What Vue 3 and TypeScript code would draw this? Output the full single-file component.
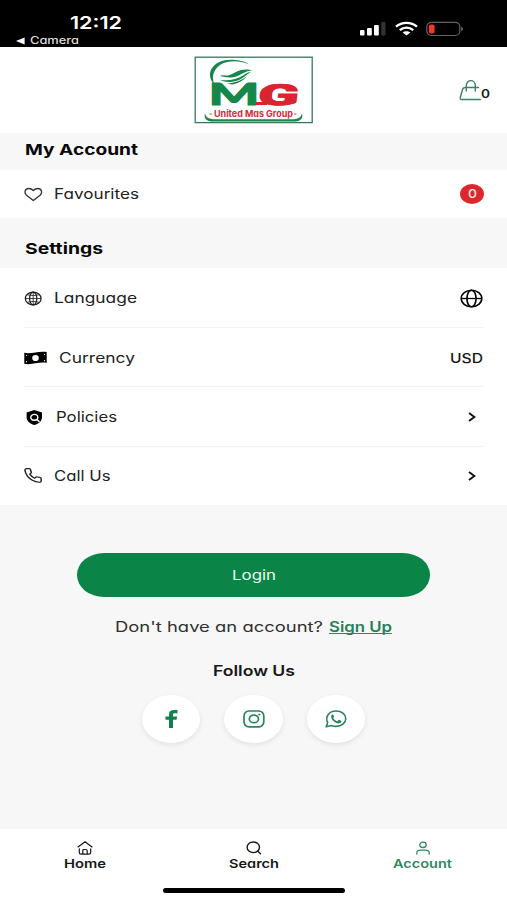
<script setup lang="ts">
interface Row {
  icon: 'globe' | 'cash' | 'shield' | 'phone'
  label: string
  width: number
  end: 'globe' | 'currency' | 'chevron'
}

const settings: Row[] = [
  { icon: 'globe', label: 'Language', width: 83, end: 'globe' },
  { icon: 'cash', label: 'Currency', width: 76, end: 'currency' },
  { icon: 'shield', label: 'Policies', width: 61, end: 'chevron' },
  { icon: 'phone', label: 'Call Us', width: 56.5, end: 'chevron' },
]

const tabs = [
  { id: 'home', label: 'Home', width: 42 },
  { id: 'search', label: 'Search', width: 50 },
  { id: 'account', label: 'Account', width: 59 },
]
</script>

<template>
  <main class="screen">
    <div class="status">
      <div class="clock">
        <svg class="time" width="52" height="18"><text x="0" y="15" textLength="52" lengthAdjust="spacingAndGlyphs">12:12</text></svg>
        <div class="back">
          <svg width="9" height="8" viewBox="0 0 9 8"><path d="M0 4 8.6 .6v6.8z" fill="#fff" /></svg>
          <svg class="camera" width="49" height="11"><text x="0" y="9" textLength="49" lengthAdjust="spacingAndGlyphs">Camera</text></svg>
        </div>
      </div>
      <div class="indicators">
        <svg width="26" height="14" viewBox="0 0 26 14">
          <rect x="0" y="8" width="4.5" height="5.5" rx="1" fill="#fff" />
          <rect x="7" y="6" width="4.8" height="7.5" rx="1" fill="#fff" />
          <rect x="14" y="3" width="4.8" height="10.5" rx="1" fill="#fff" />
          <rect x="21.3" y="0" width="4.2" height="13.5" rx="1" fill="#333" />
        </svg>
        <svg class="wifi" width="23" height="14" viewBox="0 0 23 14" fill="none" stroke="#fff" stroke-width="2.4">
          <path d="M1 4.7C7-.4 16-.4 22 4.7M4.8 8.2c3.8-3.4 9.6-3.4 13.4 0" />
          <path d="M7.6 10.6c2.2-1.8 5.6-1.8 7.8 0l-3.9 3z" fill="#fff" stroke="none" />
        </svg>
        <svg class="battery" width="38" height="15" viewBox="0 0 38 15">
          <rect x=".8" y=".3" width="33" height="13.2" rx="4.5" fill="none" stroke="#636363" stroke-width="1.2" />
          <rect x="2.8" y="2.5" width="5.8" height="9" rx="2" fill="#f0372f" />
          <path d="M35.3 4.6q3.2 2.4 0 4.8z" fill="#808080" />
        </svg>
      </div>
    </div>

    <header class="header">
      <svg class="logo" width="120" height="68" viewBox="0 0 120 68">
        <rect x="1.2" y="1.2" width="117" height="65.4" fill="#fff" stroke="#35785b" stroke-width="1.3" />
        <path d="M21 29.5C9 17 20 2 41 4c6 .5 11 2 14 4.500C45 4 33 4.500 26 9c-7 5-9 13-5 20.500Z" fill="#15874b" />
        <path d="M26 20c2-1.500 5 0 8-.5 5-1 8-4.500 13-5.500s9-.5 10.500.8c-6 .2-9 3.200-14 5.200-6 2.400-12 1.500-17.500 0Z" fill="#15874b" />
        <path d="M26 24c9 1 17-.5 23-4.500 3-2 5-3.500 8-3.500-4 2-6 5-11 7.500-6 3-13 3.500-20 .5Z" fill="#15874b" />
        <path d="M33 27.500c9-.5 16-4 21-8.500-4 5-9 8.500-16 9.500Z" fill="#15874b" />
        <text class="mark green" x="14.500" y="49" textLength="51" lengthAdjust="spacingAndGlyphs">M</text>
        <text class="mark red" transform="translate(63 49) skewX(-7)" x="0" y="0" textLength="41" lengthAdjust="spacingAndGlyphs">G</text>
        <path d="M62 46h11v3H62z" fill="#dc2430" />
        <text class="brand" x="20" y="60.500" textLength="79" lengthAdjust="spacingAndGlyphs">United Mas Group</text>
        <path d="M15.500 58h2.500m82 0h2.500" stroke="#d7404b" />
        <path d="M11 57c.5 4 3 5.800 8 6.200h81c5-.4 7.500-2.200 8-6.200 1.500 5.500-2 8.500-8 8.500H19c-6 0-9.500-3-8-8.500Z" fill="#15874b" />
      </svg>
      <div class="cart">
        <svg width="23" height="21" viewBox="0 0 23 21" fill="none" stroke="#3d8162" stroke-width="1.4" stroke-linecap="round" stroke-linejoin="round">
          <path d="M19.500 7.500H6.200Q4 7.500 3.500 9.700L1.300 17.500Q.9 19.500 3 19.500h18.500M7.300 11V5.600C7.300-1 16.300-1 16.300 5.600V11" />
        </svg>
        <svg class="count" width="9" height="12"><text x="0" y="10" textLength="9" lengthAdjust="spacingAndGlyphs">0</text></svg>
      </div>
    </header>

    <h2 class="heading account">
      <svg width="113" height="20"><text x="0" y="15" textLength="113" lengthAdjust="spacingAndGlyphs">My Account</text></svg>
    </h2>
    <section class="group">
      <div class="row favourites">
        <svg class="icon" width="19" height="15" viewBox="0 0 19 15" fill="none" stroke="#333" stroke-width="1.4" stroke-linejoin="round"><path d="M9.300 13.500 2.200 8C-.2 5.700 1 1.500 4.800 1.500c2 0 3.300.8 4.500 2 1.200-1.200 2.500-2 4.500-2 3.800 0 5 4.200 2.600 6.500Z" /></svg>
        <svg class="label" width="85" height="20"><text x="0" y="15" textLength="85" lengthAdjust="spacingAndGlyphs">Favourites</text></svg>
        <span class="badge"><svg width="9" height="12"><text x="0" y="10.200" textLength="9" lengthAdjust="spacingAndGlyphs">0</text></svg></span>
      </div>
    </section>

    <h2 class="heading settings">
      <svg width="78" height="20"><text x="0" y="15" textLength="78" lengthAdjust="spacingAndGlyphs">Settings</text></svg>
    </h2>
    <section class="group list">
      <div v-for="row in settings" :key="row.label" class="row">
        <svg v-if="row.icon === 'globe'" class="icon" width="18" height="15" viewBox="0 0 18 15" fill="none" stroke="#1c1c1c" stroke-width="1.25"><ellipse cx="9.200" cy="7.500" rx="7.900" ry="6.400" /><ellipse cx="9.200" cy="7.500" rx="3.600" ry="6.400" /><path d="M1.500 7.500h15.400M9.200 1v13M3.300 3.800q5.900 1.600 11.800 0M3.300 11.200q5.900-1.600 11.800 0" stroke-width=".8" /></svg>
        <svg v-else-if="row.icon === 'cash'" class="icon" width="23" height="14" viewBox="0 0 23 14"><path d="M.3 1.800c7 1.800 14-2.200 22.400-.8v10.900c-8-1.500-15 2.500-22.400.8Z" fill="#000" /><ellipse cx="11.500" cy="7" rx="3.300" ry="3.100" fill="#fff" /><g fill="#fff"><circle cx="2.600" cy="4.300" r=".6" /><circle cx="2.600" cy="10.700" r=".6" /><circle cx="20.500" cy="3.300" r=".6" /><circle cx="20.500" cy="9.700" r=".6" /></g></svg>
        <svg v-else-if="row.icon === 'shield'" class="icon" width="20" height="17" viewBox="0 0 20 17"><path d="m10.300 1 7.700 2.600v4.600c0 3.700-3 6.500-7.700 7.900-4.700-1.400-7.700-4.200-7.700-7.900V3.600Z" fill="#000" /><ellipse cx="10.300" cy="8.300" rx="3.500" ry="2.900" fill="none" stroke="#fff" stroke-width="1.400" /><path d="m12.500 10.300 3 2.600" stroke="#fff" stroke-width="1.400" /></svg>
        <svg v-else class="icon" width="18" height="15" viewBox="1 1 22 22" preserveAspectRatio="none" fill="none" stroke="#222" stroke-width="1.800" stroke-linejoin="round"><path d="M22 16.920v3a2 2 0 0 1-2.180 2 19.800 19.800 0 0 1-8.630-3.070 19.500 19.500 0 0 1-6-6 19.800 19.800 0 0 1-3.070-8.670A2 2 0 0 1 4.110 2h3a2 2 0 0 1 2 1.720c.13.960.36 1.900.7 2.810a2 2 0 0 1-.45 2.110L8.090 9.910a16 16 0 0 0 6 6l1.270-1.270a2 2 0 0 1 2.110-.45c.91.340 1.850.570 2.810.7A2 2 0 0 1 22 16.920Z" /></svg>
        <svg class="label" :class="row.icon" :width="row.width" height="20"><text x="0" y="15" :textLength="row.width" lengthAdjust="spacingAndGlyphs">{{ row.label }}</text></svg>

        <svg v-if="row.end === 'globe'" class="end" width="23" height="19" viewBox="0 0 23 19" fill="none" stroke="#000" stroke-width="1.600"><ellipse cx="11.500" cy="9.500" rx="10.300" ry="8.300" /><ellipse cx="11.500" cy="9.500" rx="4.600" ry="8.300" /><path d="M1.200 9.500h20.600" stroke-width="1.300" /></svg>
        <svg v-else-if="row.end === 'currency'" class="end usd" width="33" height="20"><text x="0" y="15" textLength="33" lengthAdjust="spacingAndGlyphs">USD</text></svg>
        <svg v-else class="end chevron" width="8" height="10" viewBox="0 0 8 10" fill="none" stroke="#111" stroke-width="1.900"><path d="m1 .9 5.400 4.100L1 9.100" /></svg>
      </div>
    </section>

    <section class="signin">
      <button class="login" type="button">
        <svg width="44" height="20"><text x="0" y="15" textLength="44" lengthAdjust="spacingAndGlyphs">Login</text></svg>
      </button>
      <p class="signup">
        <svg width="208" height="20"><text x="0" y="15" textLength="208" lengthAdjust="spacingAndGlyphs">Don't have an account?</text></svg>
        <a class="link"><svg width="63" height="20"><text x="0" y="15" textLength="63" lengthAdjust="spacingAndGlyphs">Sign Up</text></svg></a>
      </p>
      <h3 class="follow">
        <svg width="82" height="20"><text x="0" y="15" textLength="82" lengthAdjust="spacingAndGlyphs">Follow Us</text></svg>
      </h3>
      <div class="socials">
        <span class="social"><svg width="13" height="18" viewBox="0 0 13 18"><path d="M4 18V9.800H.5V6.400H4V4.200C4 1.400 6 0 9 0h3.500v3.200h-2.400C8.700 3.200 8 3.700 8 4.600v1.800h4.200l-.7 3.400H8V18Z" fill="#11804c" /></svg></span>
        <span class="social"><svg width="22" height="18" viewBox="0 0 22 18" fill="none" stroke="#288560" stroke-width="1.700"><rect x="1" y="1" width="19.800" height="15.800" rx="5" /><ellipse cx="10.900" cy="8.900" rx="4.600" ry="3.800" /><ellipse cx="16.300" cy="4.600" rx=".8" ry=".6" fill="#288560" stroke-width=".8" /></svg></span>
        <span class="social"><svg width="22" height="18" viewBox="0 0 22 18"><path d="M1.200 16.700 2.700 12.600C-.3 6.900 4 1 11 1c5.500 0 9.800 3.400 9.800 7.700S16.500 16.400 11 16.400c-1.800 0-3.300-.3-4.700-.9Z" fill="none" stroke="#288560" stroke-width="1.600" stroke-linejoin="round" /><path d="M6.400 5.200c.6-.7 1.600-.8 2-.1l.7 1.500c.2.5-.7 1-.9 1.400.9 1.500 2.300 2.600 4.200 3.200l1.200-1.100c.3-.3.7-.2 1.100 0l1.400.7c.8.5-.2 2.200-1.500 2.500-3.700.8-9.700-4.100-8.200-8.100Z" fill="#288560" /></svg></span>
      </div>
    </section>

    <nav class="tabs">
      <a v-for="tab in tabs" :key="tab.id" class="tab" :class="{ active: tab.id === 'account' }">
        <svg v-if="tab.id === 'home'" width="16" height="14" viewBox="0 0 16 14" fill="none" stroke="currentColor" stroke-width="1.200" stroke-linecap="round" stroke-linejoin="round"><path d="m1 6 7-5.200L15 6M2.300 7.800v3.700q0 1.700 1.800 1.700h7.800q1.800 0 1.800-1.700V7.800M5.800 13V9.700q0-1.200 1.400-1.200h1.600q1.400 0 1.400 1.200V13" /></svg>
        <svg v-else-if="tab.id === 'search'" width="16" height="14" viewBox="0 0 16 14" fill="none" stroke="currentColor" stroke-width="1.400" stroke-linecap="round"><ellipse cx="7.300" cy="6.300" rx="6.200" ry="5.300" /><path d="m11.700 10.200 2.900 2.600" /></svg>
        <svg v-else width="16" height="14" viewBox="0 0 16 14" fill="none" stroke="currentColor" stroke-width="1.300" stroke-linecap="round"><ellipse cx="8" cy="3.800" rx="3.200" ry="2.700" /><path d="M1.800 13v-.8q0-3 3.500-3h5.400q3.500 0 3.500 3v.8" /></svg>
        <svg class="tab-label" :width="tab.width" height="14"><text x="0" y="12" :textLength="tab.width" lengthAdjust="spacingAndGlyphs">{{ tab.label }}</text></svg>
      </a>
    </nav>
    <div class="home-area"><span class="home-indicator"></span></div>
  </main>
</template>

<style>
body {
  margin: 0;
  background: #fff;
}
</style>

<style scoped>
.screen {
  width: 507px;
  height: 900px;
  display: flex;
  flex-direction: column;
  overflow: hidden;
  background: #f7f7f7;
  font-family: Inter, "Open Sans", sans-serif;
  font-feature-settings: "cv11";
  color: #161616;
}
svg {
  display: block;
  flex: none;
  overflow: visible;
}
text {
  fill: currentColor;
  font-size: 14.2px;
}
.status {
  box-sizing: border-box;
  height: 47px;
  flex: none;
  display: flex;
  justify-content: space-between;
  background: #000;
  color: #fff;
  padding: 13.5px 43px 0 15.5px;
}
.time {
  margin-left: 54.5px;
}
.time text {
  font-size: 17.5px;
  font-weight: 600;
}
.back {
  display: flex;
  align-items: center;
  gap: 5px;
  margin-top: 3.5px;
}
.camera text {
  font-size: 10.8px;
  font-weight: 500;
  fill: #ddd;
}
.indicators {
  display: flex;
  align-items: flex-start;
  padding-top: 8.5px;
}
.wifi {
  margin-left: 9px;
}
.battery {
  margin-left: 8px;
}
.header {
  box-sizing: border-box;
  height: 86px;
  flex: none;
  display: grid;
  grid-template-columns: 1fr 120px 1fr;
  align-items: center;
  background: #fff;
  padding: 0 17px;
}
.logo {
  grid-column: 2;
}
.mark {
  font-weight: 900;
  stroke-width: 0.9;
}
.green {
  font-family: Lato, Inter, sans-serif;
  font-size: 30px;
  fill: #15874b;
  stroke: #15874b;
}
.red {
  font-family: Roboto, Inter, sans-serif;
  font-size: 29px;
  fill: #dc2430;
  stroke: #dc2430;
}
.brand {
  fill: #d12c3b;
  font-size: 9.4px;
  font-weight: 650;
}
.cart {
  display: flex;
  align-items: flex-end;
  justify-self: end;
  margin-top: 1px;
}
.count {
  margin-left: -1px;
  margin-bottom: 1px;
}
.count text {
  font-size: 11.5px;
  font-weight: 600;
}
.heading {
  box-sizing: border-box;
  flex: none;
  margin: 0;
  padding-left: 24.5px;
}
.heading text {
  font-size: 15.2px;
  font-weight: 650;
  fill: #080808;
}
.account {
  height: 37px;
  padding-top: 6.5px;
}
.settings {
  height: 50px;
  padding-top: 20.5px;
}
.group {
  background: #fff;
  padding: 0 23px 0 24px;
  flex: none;
}
.list {
  height: 237px;
}
.row {
  box-sizing: border-box;
  height: 59.6px;
  display: flex;
  align-items: center;
  border-bottom: 1.5px solid #f3f3f3;
  padding-top: 1.6px;
}
.row:last-child {
  border-bottom: 0;
  height: 58px;
  padding-top: 0;
}
.row.favourites {
  height: 48px;
}
.label {
  margin-left: 11.5px;
}
.label text {
  font-weight: 420;
  fill: #222;
}
.label.shield {
  margin-left: 12px;
}
.favourites .label {
  margin-left: 10.5px;
}
.badge {
  width: 24px;
  height: 20px;
  border-radius: 50%;
  background: #df262d;
  color: #ffe9e9;
  display: flex;
  align-items: center;
  justify-content: center;
  margin-left: auto;
}
.badge text {
  font-size: 12px;
  font-weight: 500;
}
.end {
  margin-left: auto;
  margin-right: 1px;
}
.usd text {
  font-size: 13.6px;
  font-weight: 550;
}
.chevron {
  margin-right: 8.5px;
}
.signin {
  flex: 1;
  display: flex;
  flex-direction: column;
  align-items: center;
}
.login {
  width: 353px;
  height: 43.5px;
  flex: none;
  margin: 48px 0 0;
  padding: 0;
  border: 0;
  border-radius: 27px / 21.75px;
  background: #0b8547;
  color: #e9fff1;
  display: flex;
  justify-content: center;
  align-items: center;
  font: inherit;
}
.login text {
  font-size: 13.6px;
}
.signup {
  display: flex;
  gap: 5.5px;
  margin: 20px 0 0;
}
.signup text {
  fill: #303030;
}
.link {
  height: 16px;
  border-bottom: 1.3px solid #35865f;
}
.signup .link text {
  fill: #26805a;
  font-weight: 600;
}
.follow {
  margin: 24px 0 0;
}
.follow text {
  font-size: 14.4px;
  font-weight: 600;
}
.socials {
  display: flex;
  gap: 24px;
  margin-top: 14.5px;
}
.social {
  width: 58.5px;
  height: 48px;
  border-radius: 50%;
  background: #fff;
  box-shadow: 0 2px 5px rgb(0 0 0 / 9%);
  display: flex;
  justify-content: center;
  align-items: center;
}
.tabs {
  box-sizing: border-box;
  height: 54px;
  flex: none;
  display: grid;
  grid-template-columns: repeat(3, 1fr);
  padding-top: 11.5px;
  background: #fff;
}
.tab {
  display: flex;
  flex-direction: column;
  align-items: center;
}
.tab-label {
  margin-top: 1px;
}
.tab text {
  font-size: 12px;
  font-weight: 600;
}
.active {
  color: #32885f;
}
.home-area {
  height: 17px;
  flex: none;
  display: flex;
  justify-content: center;
  align-items: flex-start;
  background: #fff;
}
.home-indicator {
  width: 182px;
  height: 5px;
  margin-top: 4.5px;
  border-radius: 3px;
  background: #000;
}
</style>
